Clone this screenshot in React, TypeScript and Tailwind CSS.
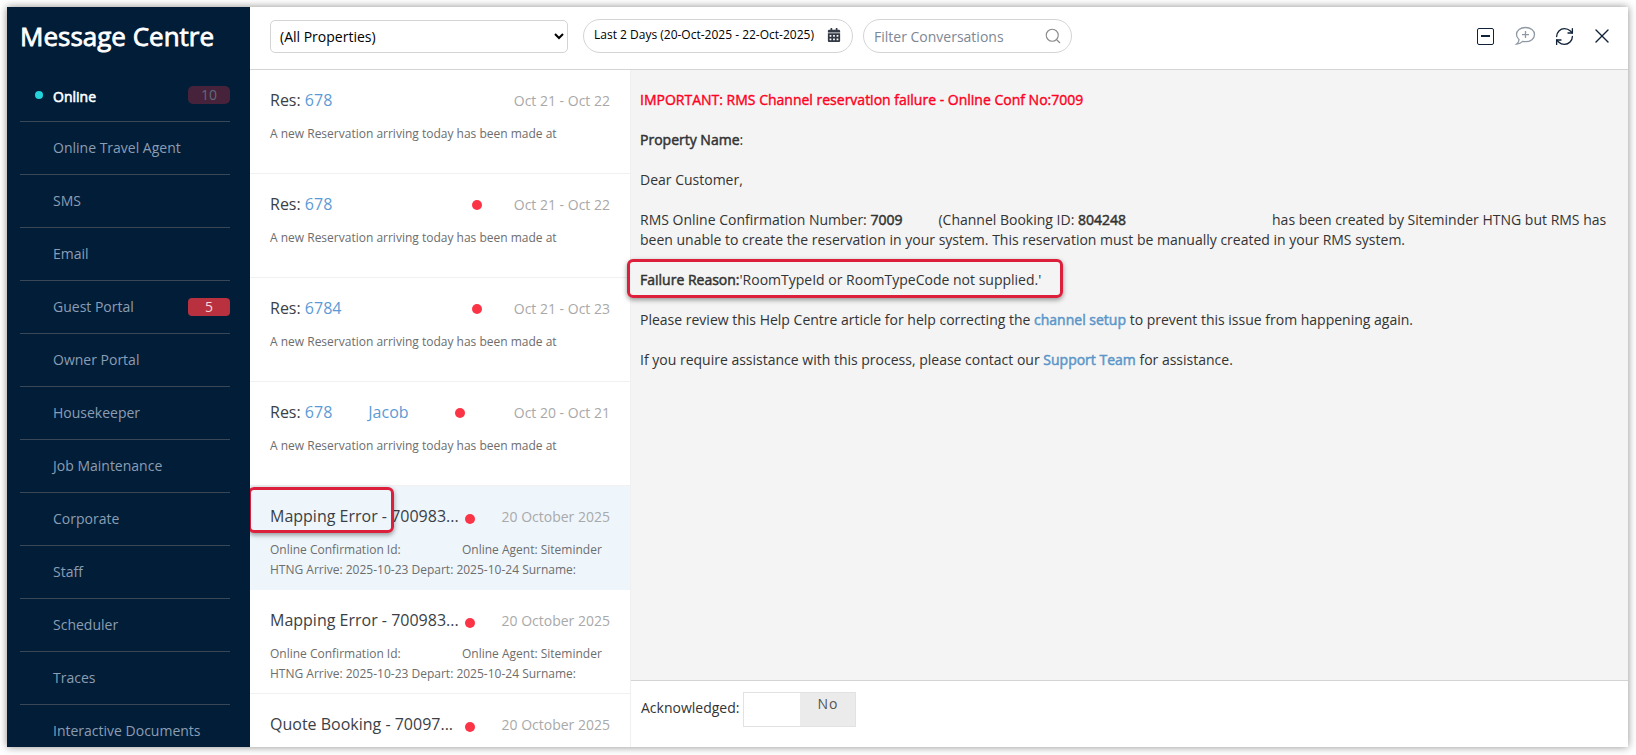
import { Search, X, RefreshCw } from 'lucide-react';
import { FaCalendarAlt } from 'react-icons/fa';

const navItems: { name: string; badge?: string }[] = [
  { name: 'Online', badge: '10' },
  { name: 'Online Travel Agent' },
  { name: 'SMS' },
  { name: 'Email' },
  { name: 'Guest Portal', badge: '5' },
  { name: 'Owner Portal' },
  { name: 'Housekeeper' },
  { name: 'Job Maintenance' },
  { name: 'Corporate' },
  { name: 'Staff' },
  { name: 'Scheduler' },
  { name: 'Traces' },
  { name: 'Interactive Documents' },
];

const resMessage = ['A new Reservation arriving today has been made at'];

const conversations = [
  { title: 'Res: ', link: '678', date: 'Oct 21 - Oct 22', dot: false, lines: resMessage },
  { title: 'Res: ', link: '678', date: 'Oct 21 - Oct 22', dot: true, lines: resMessage },
  { title: 'Res: ', link: '6784', date: 'Oct 21 - Oct 23', dot: true, lines: resMessage },
  { title: 'Res: ', link: '678', guest: 'Jacob', date: 'Oct 20 - Oct 21', dot: true, lines: resMessage },
  { title: 'Mapping Error - 700983...', date: '20 October 2025', dot: true, selected: true, mapping: true },
  { title: 'Mapping Error - 700983...', date: '20 October 2025', dot: true, mapping: true },
  { title: 'Quote Booking - 70097...', date: '20 October 2025', dot: true },
];

function Sidebar() {
  return (
    <aside className="flex h-full w-[243px] shrink-0 flex-col overflow-hidden bg-[#011d38]">
      <div className="flex h-[62px] shrink-0 items-center pb-[4px] pl-[13px] text-[26px] text-white [-webkit-text-stroke:0.8px_#fff]">
        Message Centre
      </div>
      <nav className="ml-[13px] mr-[20px]">
        {navItems.map((item, i) => (
          <div
            key={item.name}
            className="relative flex h-[53px] shrink-0 items-center justify-between border-b border-[#3a4756] pb-[1px] pl-[33px] text-[14px]"
          >
            {i === 0 && <span className="absolute left-[15px] mt-[1px] h-2 w-2 rounded-full bg-[#22d3dc]" />}
            <span
              className={i === 0 ? 'mt-[3px] text-white [-webkit-text-stroke:0.6px_#fff]' : 'text-[#8c9db3]'}
            >
              {item.name}
            </span>
            {item.badge && (
              <span
                className={
                  i === 0
                    ? 'flex h-[18px] w-[42px] items-center justify-center rounded-[5px] bg-[#46233a] text-[14px] font-medium text-[#5f6b7d]'
                    : 'flex h-[18px] w-[42px] items-center justify-center rounded-[4px] bg-[#b9303f] text-[14px] font-medium text-[#f4d9dc]'
                }
              >
                {item.badge}
              </span>
            )}
          </div>
        ))}
      </nav>
    </aside>
  );
}

function Toolbar() {
  return (
    <header className="flex h-[63px] shrink-0 items-center border-b border-[#d4d4d4] bg-white pb-[4px] pl-[20px] pr-[14.5px]">
      <select className="h-[33px] w-[298px] rounded-[5px] border border-[#d4d4d4] bg-white pl-[5px] text-[14px] text-black">
        <option>(All Properties)</option>
      </select>
      <div className="ml-[15px] flex h-[34px] w-[270px] items-center justify-between rounded-full border border-[#d4d4d4] pl-[10px] pr-[11px] text-[12px] text-black">
        <span className="-mt-[2px]">Last 2 Days (20-Oct-2025 - 22-Oct-2025)</span>
        <FaCalendarAlt className="-mt-[3px] text-[14px] text-[#333a45]" />
      </div>
      <div className="ml-[10px] flex h-[34px] w-[209px] items-center justify-between rounded-full border border-[#d4d4d4] pl-[10px] pr-[9px] text-[14px] text-[#7d8795]">
        <span>Filter Conversations</span>
        <Search className="h-[18px] w-[18px] text-[#8a8a8a]" strokeWidth={1.5} />
      </div>
      <div className="ml-auto flex items-center">
        <span className="flex h-[17px] w-[17px] items-center justify-center rounded-[2px] border-[1.5px] border-[#0f2238]">
          <span className="h-[1.5px] w-[9px] bg-[#0f2238]" />
        </span>
        <svg viewBox="0 0 22 20" className="ml-[20px] h-[20px] w-[22px]" fill="none" stroke="#8f99a5" strokeWidth="1.3">
          <path d="M11.5 1.5C6.3 1.5 2.5 4.6 2.5 8.6c0 2 1 3.7 2.5 4.8 0 1.7-.9 3.4-2.4 4.6 2.6-.2 4.7-1.2 6-2.6.9.2 1.9.3 2.9.3 5.2 0 9-3.1 9-7.1s-3.8-7.1-9-7.1z" />
          <path d="M11.5 5v7M8 8.6h7" />
        </svg>
        <RefreshCw className="ml-[18px] h-[21px] w-[21px] text-[#0f2238]" strokeWidth={1.5} />
        <X className="ml-[15px] h-[24px] w-[24px] text-[#0f2238]" strokeWidth={1.4} />
      </div>
    </header>
  );
}

function ConversationList() {
  return (
    <div className="relative h-full w-[380px] shrink-0 overflow-hidden bg-white">
      {conversations.map((c, i) => (
        <div
          key={i}
          className={
            c.selected
              ? 'h-[104px] shrink-0 bg-[#eef6fc] pl-[20px] pr-[20px]'
              : 'h-[104px] shrink-0 border-b border-[#f0f0f0] pl-[20px] pr-[20px]'
          }
        >
          <div className="relative flex h-[60px] items-center text-[16px] text-[#3a3f47]">
            <span>
              {c.title}
              {c.link && <span className="text-[#5b9bd5]">{c.link}</span>}
            </span>
            {c.guest && <span className="ml-[36px] text-[#5b9bd5]">{c.guest}</span>}
            {c.dot && (
              <span
                className={
                  c.mapping || c.title.startsWith('Quote')
                    ? 'absolute left-[195px] top-[28px] h-[10px] w-[10px] rounded-full bg-[#fb3446]'
                    : c.guest
                      ? 'absolute left-[185px] top-[26px] h-[10px] w-[10px] rounded-full bg-[#fb3446]'
                      : 'absolute left-[202px] top-[26px] h-[10px] w-[10px] rounded-full bg-[#fb3446]'
                }
              />
            )}
            <span className="ml-auto text-[14px] text-[#a9a9a9]">{c.date}</span>
          </div>
          {c.lines && <div className="-mt-[6px] text-[12px] leading-[20px] text-[#6d6d6d]">{c.lines[0]}</div>}
          {c.mapping && (
            <div className="-mt-[6px] text-[12px] leading-[19.7px] text-[#6d6d6d]">
              <div className="flex">
                <span className="w-[192px]">Online Confirmation Id:</span>
                <span>Online Agent: Siteminder</span>
              </div>
              <div>HTNG Arrive: 2025-10-23 Depart: 2025-10-24 Surname:</div>
            </div>
          )}
        </div>
      ))}
      <div className="absolute left-[-2px] top-[417px] h-[46px] w-[146px] rounded-[6px] border-[3px] border-[#dc1f3a] shadow-[0_2px_5px_rgba(0,0,0,0.4)]" />
    </div>
  );
}

function MessagePane() {
  return (
    <section className="relative flex h-full min-w-0 flex-1 flex-col border-l border-[#f0f0f0]">
      <div className="flex-1 bg-[#f4f4f4] pl-[9px] pr-[20px] pt-[20px] text-[14px] leading-[20px] text-[#333]">
        <p className="mb-[20px] text-[#ff0022] [-webkit-text-stroke:0.4px_#ff0022]">
          IMPORTANT: RMS Channel reservation failure - Online Conf No:7009
        </p>
        <p className="mb-[20px]">
          <b className="font-normal [-webkit-text-stroke:0.5px_#333]">Property Name</b>:
        </p>
        <p className="mb-[20px]">Dear Customer,</p>
        <p className="mb-[20px]">
          RMS Online Confirmation Number: <b className="font-normal [-webkit-text-stroke:0.5px_#333]">7009</b>
          <span className="inline-block w-[36px]" />
          (Channel Booking ID: <b className="font-normal [-webkit-text-stroke:0.5px_#333]">804248</b>
          <span className="inline-block w-[146px]" />
          has been created by Siteminder HTNG but RMS has
          <br />
          been unable to create the reservation in your system. This reservation must be manually created in your RMS
          system.
        </p>
        <p className="mb-[20px]">
          <b className="font-normal [-webkit-text-stroke:0.5px_#333]">Failure Reason:</b>'RoomTypeId or RoomTypeCode not
          supplied.'
        </p>
        <p className="mb-[20px]">
          Please review this Help Centre article for help correcting the{' '}
          <a className="text-[#5b96c9] [-webkit-text-stroke:0.5px_#5b96c9]">channel setup</a> to prevent this issue from
          happening again.
        </p>
        <p>
          If you require assistance with this process, please contact our{' '}
          <a className="text-[#5b96c9] [-webkit-text-stroke:0.5px_#5b96c9]">Support Team</a> for assistance.
        </p>
      </div>
      <div className="flex h-[67px] shrink-0 items-center border-t border-[#d4d4d4] bg-white pb-[10px] pl-[10px] text-[14px] text-[#333]">
        <span className="-mt-[3px]">Acknowledged:</span>
        <div className="ml-[4px] flex h-[35px] w-[113px] border border-[#e2e2e2]">
          <span className="w-[56px] bg-white" />
          <span className="flex-1 bg-[#ebebeb] text-center tracking-[1px] text-[#555]">No</span>
        </div>
      </div>
      <div className="absolute left-[-4px] top-[189px] h-[39px] w-[436px] rounded-[6px] border-[3px] border-[#dc1f3a] shadow-[0_2px_5px_rgba(0,0,0,0.4)]" />
    </section>
  );
}

export default function App() {
  return (
    <div className="h-[755px] w-[1636px] overflow-hidden bg-white pl-[7px] pt-[7px] font-['Open_Sans',sans-serif]">
      <div className="flex h-[740px] w-[1621px] bg-white shadow-[0_0_8px_rgba(0,0,0,0.45)]">
        <Sidebar />
        <div className="flex min-w-0 flex-1 flex-col">
          <Toolbar />
          <div className="flex min-h-0 flex-1">
            <ConversationList />
            <MessagePane />
          </div>
        </div>
      </div>
    </div>
  );
}
